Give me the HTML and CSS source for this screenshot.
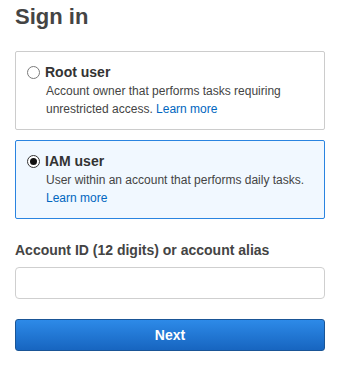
FILE: index.html
```html
<!DOCTYPE html>
<html>
<head>
<meta charset="utf-8">
<link rel="stylesheet" href="styles.css">
</head>
<body>
<div class="page">
  <h1 class="title">Sign in</h1>
  <div class="card">
    <div class="option">
      <span class="radio"></span>
      <span class="option-label">Root user</span>
    </div>
    <p class="desc">Account owner that performs tasks requiring<br>unrestricted access. <a class="link" href="#">Learn more</a></p>
  </div>
  <div class="card card-selected">
    <div class="option">
      <span class="radio radio-checked"></span>
      <span class="option-label">IAM user</span>
    </div>
    <p class="desc">User within an account that performs daily tasks.<br><a class="link" href="#">Learn more</a></p>
  </div>
  <label class="field-label">Account ID (12 digits) or account alias</label>
  <div class="input"></div>
  <button class="btn">Next</button>
</div>
</body>
</html>
```
FILE: styles.css
```css
* { box-sizing: border-box; }
html, body { margin: 0; padding: 0; background: #fff; }
body { font-family: "Liberation Sans", Arial, sans-serif; color: #444; }
.page { padding: 4px 14px 0 15px; display: flex; flex-direction: column; }
.title { margin: 0; font-size: 22px; line-height: 26px; font-weight: bold; color: #444; }
.card {
  margin-top: 21px;
  border: 1px solid #cccccc;
  border-radius: 2px;
  padding: 11px 10px 11px 11px;
  height: 79px;
}
.card + .card { margin-top: 10px; }
.card-selected { border-color: #2a84e0; background: #f1f8ff; }
.option { display: flex; align-items: center; height: 18px; }
.radio {
  width: 13px; height: 13px; border-radius: 50%;
  border: 1px solid #7a7a7a; background: #fff;
  display: flex; align-items: center; justify-content: center;
  margin-right: 5px; flex: none;
}
.radio-checked { border-color: #333; }
.radio-checked::after {
  content: ""; width: 7px; height: 7px; border-radius: 50%; background: #111;
}
.option-label { font-size: 14px; font-weight: bold; line-height: 18px; color: #333; }
.desc {
  margin: 2px 0 0 19px;
  font-size: 12px; line-height: 17.5px; color: #444;
}
.link { color: #0066c0; text-decoration: none; }
.field-label {
  margin-top: 22px;
  font-size: 14px; font-weight: bold; line-height: 18px; color: #444;
}
.input {
  margin-top: 8px;
  height: 32px;
  border: 1px solid #cfcfcf;
  border-radius: 4px;
  background: #fff;
}
.btn {
  margin-top: 20px;
  height: 32px;
  border: 1px solid #1a5596;
  border-radius: 3px;
  background: linear-gradient(#2d8ae8, #1765c0);
  color: #fff;
  font-family: "Liberation Sans", Arial, sans-serif;
  font-size: 14px; font-weight: bold;
  padding: 0;
}
```
